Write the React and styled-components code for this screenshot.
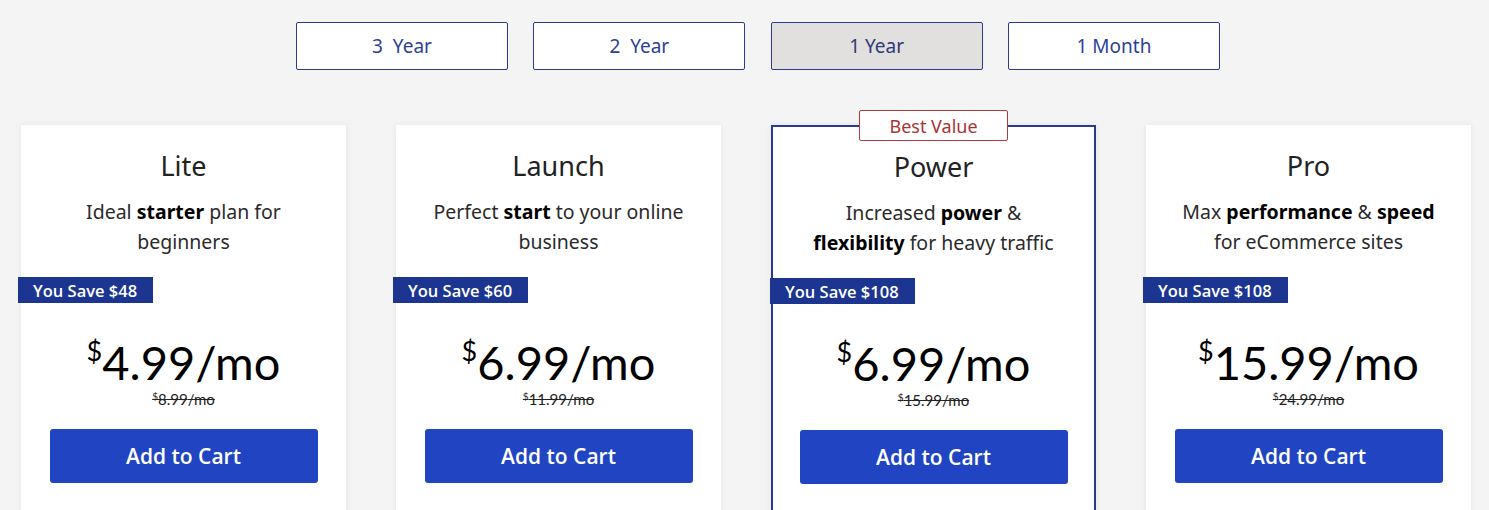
import styled, { createGlobalStyle } from "styled-components";

const plans = [
  {
    name: "Lite",
    lines: [["Ideal ", <b key="a">starter</b>, " plan for"], ["beginners"]],
    save: "$48",
    price: "4.99",
    old: "8.99",
  },
  {
    name: "Launch",
    lines: [["Perfect ", <b key="a">start</b>, " to your online"], ["business"]],
    save: "$60",
    price: "6.99",
    old: "11.99",
  },
  {
    name: "Power",
    lines: [
      ["Increased ", <b key="a">power</b>, " &"],
      [<b key="b">flexibility</b>, " for heavy traffic"],
    ],
    save: "$108",
    price: "6.99",
    old: "15.99",
    featured: true,
  },
  {
    name: "Pro",
    lines: [
      ["Max ", <b key="a">performance</b>, " & ", <b key="b">speed</b>],
      ["for eCommerce sites"],
    ],
    save: "$108",
    price: "15.99",
    old: "24.99",
  },
];

const terms = ["3  Year", "2  Year", "1 Year", "1 Month"];

function App() {
  return (
    <Page>
      <GlobalStyle />
      <Tabs>
        {terms.map((t) => (
          <Tab key={t} active={t === "1 Year"}>
            {t}
          </Tab>
        ))}
      </Tabs>
      <Cards>
        {plans.map((p) => (
          <Card key={p.name} featured={p.featured}>
            {p.featured && <BestValue>Best Value</BestValue>}
            <Title>{p.name}</Title>
            <Desc>
              {p.lines.map((l, i) => (
                <DescLine key={i}>{l}</DescLine>
              ))}
            </Desc>
            <Save>You Save {p.save}</Save>
            <Price>
              <Dollar>$</Dollar>
              {p.price}/mo
            </Price>
            <OldPrice>
              <OldDollar>$</OldDollar>
              {p.old}/mo
            </OldPrice>
            <CartButton>Add to Cart</CartButton>
          </Card>
        ))}
      </Cards>
    </Page>
  );
}

const GlobalStyle = createGlobalStyle`
  body {
    margin: 0;
    background: #f4f4f4;
    overflow: hidden;
  }
`;

const Navy = "#2b3a8e";
const SaveBlue = "#1c3590";
const ButtonBlue = "#2145c2";
const Mont = `"Noto Sans", "Open Sans", sans-serif`;
const Kanit = `"Open Sans", "Noto Sans", sans-serif`;
const Digits = `Lato, "Open Sans", sans-serif`;

const Page = styled.div`
  width: 1489px;
  height: 510px;
  overflow: hidden;
  background: #f4f4f4;
`;

const Tabs = styled.div`
  display: flex;
  gap: 25.33px;
  padding: 22px 0 0 296px;
`;

const Tab = styled.div`
  width: 212px;
  height: 48px;
  box-sizing: border-box;
  border: 1px solid ${Navy};
  border-radius: 2px;
  background: ${(p) => (p.active ? "#e2dfdf" : "#fff")};
  color: ${(p) => (p.active ? "#2f3a78" : "#2e3f96")};
  font-family: ${Mont};
  font-size: 19px;
  white-space: pre;
  display: flex;
  align-items: center;
  justify-content: center;
`;

const Cards = styled.div`
  display: flex;
  gap: 50px;
  padding: 55px 0 0 21px;
`;

const Card = styled.div`
  position: relative;
  width: 325px;
  min-height: 420px;
  box-sizing: border-box;
  background: #fff;
  box-shadow: 0 0 6px rgba(0, 0, 0, 0.07);
  border: ${(p) => (p.featured ? `2px solid ${Navy}` : "none")};
  padding: ${(p) => (p.featured ? "24px 0 0" : "25px 0 0")};
  display: flex;
  flex-direction: column;
  align-items: center;
`;

const BestValue = styled.div`
  position: absolute;
  top: -17px;
  left: 86px;
  width: 149px;
  height: 31px;
  box-sizing: border-box;
  border: 1px solid #b03c3c;
  border-radius: 2px;
  background: #fff;
  color: #a83434;
  font-family: ${Mont};
  font-size: 18px;
  display: flex;
  align-items: center;
  justify-content: center;
`;

const Title = styled.div`
  font-family: ${Mont};
  font-size: 27px;
  line-height: 32px;
  color: #222;
`;

const Desc = styled.div`
  margin-top: 15px;
  font-family: ${Mont};
  font-size: 19.5px;
  line-height: 30px;
  color: #2a2a2a;
  text-align: center;
  b {
    color: #000;
  }
`;

const DescLine = styled.div`
  white-space: nowrap;
`;

const Save = styled.div`
  align-self: flex-start;
  margin: 20px 0 0 -3px;
  height: 26px;
  padding: 0 16px 0 15px;
  background: ${SaveBlue};
  color: #fff;
  font-family: ${Kanit};
  font-weight: 600;
  font-size: 16.5px;
  display: flex;
  align-items: center;
`;

const Price = styled.div`
  margin-top: 31px;
  font-family: ${Digits};
  font-size: 47px;
  line-height: 56px;
  color: #000;
`;

const Dollar = styled.span`
  font-size: 27px;
  line-height: 0;
  vertical-align: 19px;
`;

const OldPrice = styled.div`
  font-family: ${Digits};
  font-size: 15px;
  line-height: 19px;
  color: #222;
  text-decoration: line-through;
`;

const OldDollar = styled.span`
  font-size: 10px;
  line-height: 0;
  vertical-align: 5px;
  text-decoration: none;
`;

const CartButton = styled.button`
  margin-top: 20px;
  width: 268px;
  height: 54px;
  border: none;
  border-radius: 3px;
  background: ${ButtonBlue};
  color: #fff;
  font-family: ${Kanit};
  font-weight: 600;
  font-size: 21px;
`;

export default App;
